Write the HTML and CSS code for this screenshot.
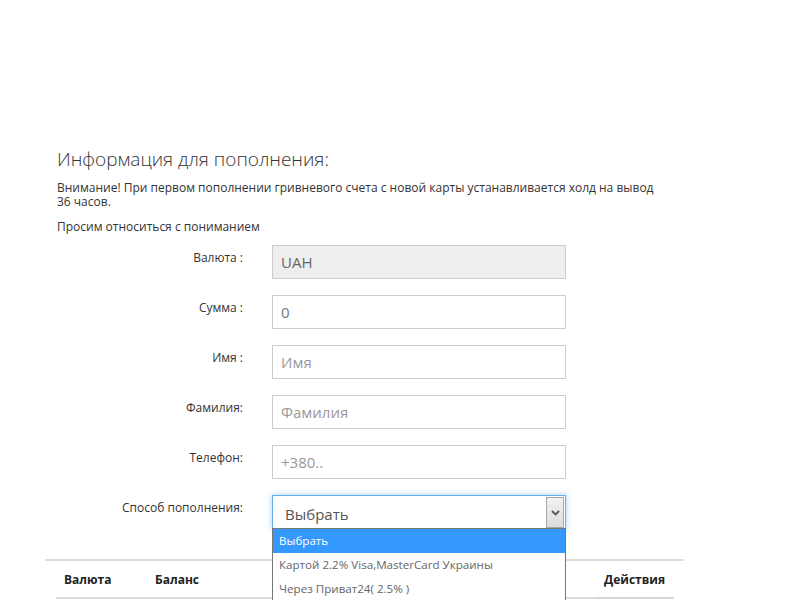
FILE: index.html
```html
<!DOCTYPE html>
<html lang="ru">
<head>
<meta charset="utf-8">
<title>Информация для пополнения</title>
<link rel="stylesheet" href="styles.css">
</head>
<body>
<div class="page">
  <section class="info">
    <h3 class="info-title">Информация для пополнения:</h3>
    <p class="info-text">Внимание! При первом пополнении гривневого счета с новой карты устанавливается холд на вывод 36 часов.</p>
    <p class="info-text">Просим относиться с пониманием</p>
    <form class="form">
      <div class="form-row">
        <label class="form-label">Валюта :</label>
        <div class="form-control disabled">UAH</div>
      </div>
      <div class="form-row">
        <label class="form-label">Сумма :</label>
        <div class="form-control">0</div>
      </div>
      <div class="form-row">
        <label class="form-label">Имя :</label>
        <div class="form-control placeholder">Имя</div>
      </div>
      <div class="form-row">
        <label class="form-label">Фамилия:</label>
        <div class="form-control placeholder">Фамилия</div>
      </div>
      <div class="form-row">
        <label class="form-label">Телефон:</label>
        <div class="form-control placeholder">+380..</div>
      </div>
      <div class="form-row">
        <label class="form-label">Способ пополнения:</label>
        <div class="select-wrap">
          <div class="select">
            <span class="select-value">Выбрать</span>
            <span class="select-arrow">
              <svg width="9" height="6" viewBox="0 0 9 6"><path d="M1 1 L4.5 4.5 L8 1" fill="none" stroke="#555" stroke-width="1.8"/></svg>
            </span>
          </div>
          <ul class="dropdown">
            <li class="dropdown-item active">Выбрать</li>
            <li class="dropdown-item">Картой 2.2% Visa,MasterCard Украины</li>
            <li class="dropdown-item">Через Приват24( 2.5% )</li>
          </ul>
        </div>
      </div>
    </form>
  </section>
  <div class="panel">
    <table class="table">
      <thead>
        <tr>
          <th class="col-cur">Валюта</th>
          <th class="col-bal">Баланс</th>
          <th class="col-fill"></th>
          <th class="col-act">Действия</th>
        </tr>
      </thead>
    </table>
  </div>
</div>
</body>
</html>
```
FILE: styles.css
```css
html, body {
  margin: 0;
  padding: 0;
  background: #fff;
}
body {
  font-family: "Open Sans", "DejaVu Sans", sans-serif;
  color: #333;
  width: 800px;
  height: 600px;
  overflow: hidden;
}
.page {
  padding-top: 149px;
}
.info {
  margin-left: 57px;
  width: 606px;
}
.info-title {
  margin: 0;
  font-size: 19px;
  font-weight: 300;
  line-height: 21px;
  color: #333;
  white-space: nowrap;
}
.info-text {
  margin: 11px 0 0;
  font-size: 12px;
  line-height: 14px;
}
.form {
  margin-top: 11px;
  display: flex;
  flex-direction: column;
  gap: 16px;
}
.form-row {
  display: grid;
  grid-template-columns: 186px 294px;
  column-gap: 29px;
  align-items: start;
}
.form-label {
  text-align: right;
  font-size: 12px;
  line-height: 14px;
  padding-top: 6px;
  color: #333;
}
.form-control {
  box-sizing: border-box;
  height: 34px;
  border: 1px solid #ccc;
  padding: 0 8px;
  font-size: 15px;
  line-height: 32px;
  color: #777;
  background: #fff;
}
.form-control.disabled {
  background: #eee;
  color: #666;
}
.form-control.placeholder {
  color: #999;
}
.select-wrap {
  position: relative;
}
.select {
  box-sizing: border-box;
  height: 34px;
  border: 1px solid #66afe9;
  box-shadow: 0 0 6px rgba(102, 175, 233, 0.6);
  display: flex;
  align-items: stretch;
  background: #fff;
}
.select-value {
  flex: 1;
  padding: 4px 0 0 12px;
  font-size: 15px;
  line-height: 28px;
  color: #555;
}
.select-arrow {
  width: 16px;
  margin: 1px 1px 0 0;
  border: 1px solid #a6a6a6;
  background: linear-gradient(#f2f2f2, #dcdcdc);
  display: flex;
  align-items: center;
  justify-content: center;
}
.dropdown {
  position: absolute;
  left: 0;
  top: 33px;
  width: 294px;
  box-sizing: border-box;
  margin: 0;
  padding: 0;
  list-style: none;
  border: 1px solid #767676;
  background: #fff;
  z-index: 10;
}
.dropdown-item {
  height: 24px;
  line-height: 24px;
  padding-left: 6px;
  font-size: 11.6px;
  color: #666;
  white-space: nowrap;
}
.dropdown-item.active {
  background: #3399ff;
  color: #fff;
}
.panel {
  margin: 30px 0 0 45px;
  width: 639px;
  border-top: 2px solid #ddd;
  padding: 0 10px 0 11px;
  box-sizing: border-box;
}
.table {
  width: 100%;
  border-collapse: collapse;
}
.table th {
  text-align: left;
  font-size: 12px;
  font-weight: 700;
  color: #222;
  padding: 10px 8px 9px;
  line-height: 17px;
  border-bottom: 2px solid #ddd;
}
.col-cur { width: 75px; }
.col-bal { width: 80px; }
.table th.col-act {
  width: 62px;
  padding-left: 8px;
  border-bottom-color: #d6d6d6;
}
```
